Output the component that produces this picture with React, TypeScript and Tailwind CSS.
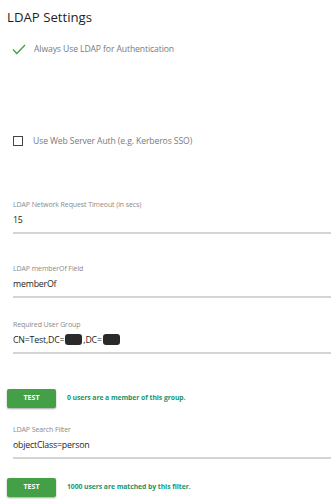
import React from 'react'

function Field({ label, children, className = '' }: { label: string; children: React.ReactNode; className?: string }) {
  return (
    <div className={`ml-[13px] border-b-2 border-[#d4d4d4] ${className}`}>
      <div className="text-[7px] leading-[10px] tracking-[-0.1px] text-[#8a8a8a]">{label}</div>
      <div className="mt-[3px] h-[19px] text-[8.8px] leading-[15px] tracking-[-0.2px] text-[#1e1e1e]">{children}</div>
    </div>
  )
}

function Blob() {
  return <span className="mx-[1px] inline-block h-[11px] w-[17px] rounded-[3px] bg-[#2a2a2a] align-[-2px] blur-[0.7px]" />
}

function TestRow({ message }: { message: string }) {
  return (
    <div className="flex items-center gap-[11px] pl-[7px]">
      <button
        type="button"
        className="h-[19px] w-[49px] rounded-[2px] bg-[#43a047] text-[7px] font-bold text-white shadow-[0_1px_2px_rgba(0,0,0,0.35)]"
      >
        TEST
      </button>
      <span className="text-[6.8px] font-bold tracking-[-0.05px] text-[#16966e]">{message}</span>
    </div>
  )
}

export default function App() {
  return (
    <div className="h-[500px] w-[331px] overflow-hidden bg-white font-['Open_Sans',sans-serif]">
      <h1 className="pl-[7px] pt-[7px] text-[13.2px] leading-[20px] text-[#1f1f1f]">LDAP Settings</h1>

      <div className="mt-[15px] flex items-center gap-[8px] pl-[12px]">
        <svg width="14" height="11" viewBox="0 0 14 11" fill="none">
          <path d="M1 5.5 L4.8 9.5 L13 1" stroke="#3aa141" strokeWidth="1.3" />
        </svg>
        <span className="text-[8.6px] leading-[14px] tracking-[-0.1px] text-[#7a7a7a]">Always Use LDAP for Authentication</span>
      </div>

      <div className="mt-[78px] flex items-center gap-[10px] pl-[13px]">
        <span className="h-[10px] w-[10px] border-[1.5px] border-[#444]" />
        <span className="text-[8.6px] leading-[14px] tracking-[-0.1px] text-[#7a7a7a]">Use Web Server Auth (e.g. Kerberos SSO)</span>
      </div>

      <Field label="LDAP Network Request Timeout (in secs)" className="mt-[52px]">
        15
      </Field>

      <Field label="LDAP memberOf Field" className="mt-[30px]">
        memberOf
      </Field>

      <Field label="Required User Group" className="mt-[22px]">
        CN=Test,DC=<Blob />,DC=<Blob />
      </Field>

      <div className="mt-[35px]">
        <TestRow message="0 users are a member of this group." />
      </div>

      <Field label="LDAP Search Filter" className="mt-[17px]">
        objectClass=person
      </Field>

      <div className="mt-[19px]">
        <TestRow message="1000 users are matched by this filter." />
      </div>
    </div>
  )
}
